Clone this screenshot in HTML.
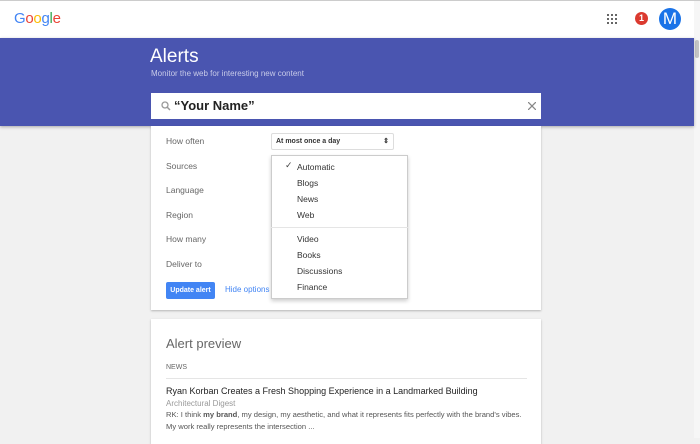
<!DOCTYPE html><html><head><style>
*{margin:0;padding:0;box-sizing:border-box}
body{width:700px;height:438px;overflow:hidden;background:#f1f1f1;font-family:"Liberation Sans",Arial,sans-serif;position:relative;color:#444}
.a{position:absolute}
</style></head><body>
<div class="a" style="left:0;top:0;width:700px;height:38px;background:#fff;border-top:1px solid #ccc"></div>
<div class="a" style="left:14px;top:10px;font-size:15px;letter-spacing:-0.3px"><span style="color:#4285f4">G</span><span style="color:#ea4335">o</span><span style="color:#fbbc05">o</span><span style="color:#4285f4">g</span><span style="color:#34a853">l</span><span style="color:#ea4335">e</span></div>
<svg class="a" style="left:607px;top:14px" width="10" height="10"><g fill="#666"><rect x="0" y="0" width="2" height="2"/><rect x="4" y="0" width="2" height="2"/><rect x="8" y="0" width="2" height="2"/><rect x="0" y="4" width="2" height="2"/><rect x="4" y="4" width="2" height="2"/><rect x="8" y="4" width="2" height="2"/><rect x="0" y="8" width="2" height="2"/><rect x="4" y="8" width="2" height="2"/><rect x="8" y="8" width="2" height="2"/></g></svg>
<div class="a" style="left:635px;top:12px;width:13px;height:13px;border-radius:50%;background:#db3a2f;color:#fff;font-size:9px;font-weight:bold;text-align:center;line-height:13px">1</div>
<div class="a" style="left:659px;top:8px;width:22px;height:22px;border-radius:50%;background:#1a73e8;color:#fff;font-size:17px;text-align:center;line-height:22px">M</div>
<div class="a" style="left:694px;top:1px;width:6px;height:437px;background:#f6f6f6"></div>
<div class="a" style="left:695px;top:40px;width:4px;height:18px;background:#c5c5c5;border-radius:2px"></div>
<div class="a" style="left:0;top:38px;width:694px;height:88px;background:#4a55b0;box-shadow:0 1px 3px rgba(0,0,0,.3)"></div>
<div class="a" style="left:150px;top:46px;font-size:19px;color:#fff">Alerts</div>
<div class="a" style="left:151px;top:69px;font-size:8px;color:#c8cbe8">Monitor the web for interesting new content</div>
<div class="a" style="left:151px;top:126px;width:390px;height:184px;background:#fff;box-shadow:0 1px 2px rgba(0,0,0,.25)"></div>
<div class="a" style="left:151px;top:93px;width:390px;height:26px;background:#fff"></div>
<svg class="a" style="left:161px;top:101px" width="10" height="10"><circle cx="4" cy="4" r="3" fill="none" stroke="#999" stroke-width="1.3"/><line x1="6" y1="6" x2="9" y2="9" stroke="#999" stroke-width="1.5"/></svg>
<div class="a" style="left:174px;top:98px;font-size:13px;font-weight:bold;color:#222">“Your Name”</div>
<svg class="a" style="left:528px;top:102px" width="8" height="8"><path d="M0 0L8 8M8 0L0 8" stroke="#888" stroke-width="1.3"/></svg>
<div class="a" style="left:166px;top:129px;font-size:8.5px;line-height:24.6px;color:#666">How often<br>Sources<br>Language<br>Region<br>How many<br>Deliver to</div>
<div class="a" style="left:271px;top:133px;width:123px;height:17px;border:1px solid #ddd;border-radius:2px;font-size:7px;font-weight:bold;color:#333;padding:4px 0 0 4px">At most once a day<span style="position:absolute;right:4px;top:3px;font-size:7px">⇕</span></div>
<div class="a" style="left:271px;top:155px;width:137px;height:144px;background:#fff;border:1px solid #ccc;box-shadow:0 2px 4px rgba(0,0,0,.2)"></div>
<div class="a" style="left:271px;top:227px;width:137px;height:1px;background:#e5e5e5"></div>
<div class="a" style="left:285px;top:160px;font-size:9px;color:#444">✓</div>
<div class="a" style="left:297px;top:159px;font-size:8.5px;line-height:16px;color:#333">Automatic<br>Blogs<br>News<br>Web</div>
<div class="a" style="left:297px;top:231px;font-size:8.5px;line-height:16px;color:#333">Video<br>Books<br>Discussions<br>Finance</div>
<div class="a" style="left:166px;top:282px;width:49px;height:17px;background:#4285f4;border-radius:2px;color:#fff;font-size:7px;font-weight:bold;text-align:center;line-height:17px">Update alert</div>
<div class="a" style="left:225px;top:285px;font-size:8px;color:#4285f4">Hide options</div>
<div class="a" style="left:151px;top:319px;width:390px;height:125px;background:#fff;box-shadow:0 1px 2px rgba(0,0,0,.25)"></div>
<div class="a" style="left:166px;top:336px;font-size:13px;color:#666">Alert preview</div>
<div class="a" style="left:166px;top:364px;font-size:7px;color:#666">NEWS</div>
<div class="a" style="left:166px;top:378px;width:361px;height:1px;background:#e5e5e5"></div>
<div class="a" style="left:166px;top:386px;font-size:9px;color:#222">Ryan Korban Creates a Fresh Shopping Experience in a Landmarked Building</div>
<div class="a" style="left:166px;top:399px;font-size:8px;color:#999">Architectural Digest</div>
<div class="a" style="left:166px;top:409px;width:365px;font-size:7.6px;line-height:12px;color:#555">RK: I think <b>my brand</b>, my design, my aesthetic, and what it represents fits perfectly with the brand's vibes. My work really represents the intersection ...</div>
</body></html>
